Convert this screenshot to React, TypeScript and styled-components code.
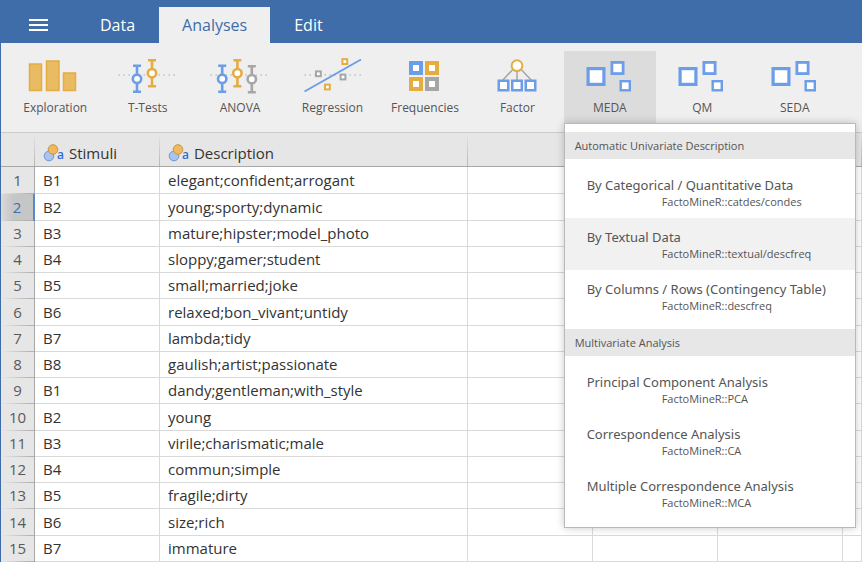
import React from "react";
import styled, { createGlobalStyle } from "styled-components";

const BLUE = "#3e6da9";
const SKY = "#6b9de8";
const GOLD = "#e6ac40";
const GREY = "#a6a6a6";

const GlobalStyle = createGlobalStyle`
  *, *::before, *::after { box-sizing: border-box; }
  body {
    margin: 0;
    font-family: "Open Sans", "Noto Sans", sans-serif;
    color: #333;
    overflow: hidden;
  }
  button { font: inherit; color: inherit; border: 0; margin: 0; padding: 0; background: none; cursor: pointer; }
`;

const Window = styled.div`
  display: flex;
  flex-direction: column;
  height: 100vh;
  overflow: hidden;
  border-left: 1px solid ${BLUE};
  background: #fff;
`;

const TitleBar = styled.header`
  display: flex;
  align-items: flex-end;
  flex: none;
  height: 43px;
  background: ${BLUE};
`;

const MenuButton = styled.button`
  display: flex;
  align-items: center;
  justify-content: center;
  width: 75px;
  height: 36px;
`;

const TabList = styled.div`
  display: flex;
`;

const Tab = styled.button<{ $active?: boolean }>`
  height: 36px;
  padding: 1px ${(p) => (p.$active ? "23px" : "24px")} 0;
  font-size: 16px;
  line-height: 35px;
  color: ${(p) => (p.$active ? BLUE : "#fff")};
  background: ${(p) => (p.$active ? "#efefef" : "transparent")};
`;

const Ribbon = styled.nav`
  position: relative;
  z-index: 2;
  display: flex;
  flex: none;
  height: 90px;
  padding: 8px 21px 0 8px;
  background: #efefef;
  border-bottom: 1px solid #cbcbcb;
`;

const RibbonItem = styled.div`
  position: relative;
  flex: 1 1 0;
  max-width: 93px;
`;

const RibbonButton = styled.button<{ $open?: boolean }>`
  display: flex;
  flex-direction: column;
  align-items: center;
  gap: 2px;
  width: 100%;
  height: 73px;
  font-size: 12px;
  line-height: 18px;
  color: #555;
  background: ${(p) => (p.$open ? "#dcdcdc" : "transparent")};
`;

const Menu = styled.div`
  position: absolute;
  top: 72px;
  left: 0;
  width: 292px;
  padding: 8px 0;
  background: #fff;
  border: 1px solid #b9b9b9;
  box-shadow: 0 0 8px rgba(0, 0, 0, 0.22);
`;

const MenuHeading = styled.h2`
  margin: 0 0 7px;
  padding: 0 10px;
  font-size: 11px;
  font-weight: 400;
  line-height: 27px;
  color: #555;
  background: #e7e7e7;
  &:not(:first-child) { margin-top: 7px; }
`;

const MenuItem = styled.button<{ $hover?: boolean }>`
  display: block;
  width: 100%;
  height: 52px;
  padding: 1px 0 0 22px;
  text-align: left;
  white-space: nowrap;
  color: #555;
  background: ${(p) => (p.$hover ? "#f1f1f1" : "transparent")};
`;

const ItemTitle = styled.span`
  display: block;
  font-family: "Noto Sans", "Open Sans", sans-serif;
  font-size: 13px;
  line-height: 18px;
`;

const ItemSource = styled.span`
  display: block;
  padding-left: 75px;
  font-size: 11px;
  line-height: 16px;
`;

const SheetArea = styled.main`
  flex: 1;
  min-height: 0;
  overflow: hidden;
`;

const Sheet = styled.table`
  width: 100%;
  table-layout: fixed;
  border-collapse: separate;
  border-spacing: 0;
  font-size: 15px;
  line-height: 20px;
`;

const HeadCell = styled.th`
  height: 34px;
  padding: 6px 0 0 8px;
  text-align: left;
  font-weight: 400;
  white-space: nowrap;
  background: linear-gradient(#e6e6e6, #b5b5b5) right / 1px 100% no-repeat #e6e6e6;
  border-bottom: 1px solid #a8a8a8;
`;

const HeadLabel = styled.span`
  display: flex;
  align-items: center;
  gap: 5px;
`;

const Row = styled.tr`
  height: 26px;
  &:first-child, &:nth-child(4n + 2) { height: 27px; }
`;

const RowHead = styled.th<{ $selected?: boolean }>`
  padding: 0 0 2px;
  font-weight: 400;
  text-align: center;
  color: ${(p) => (p.$selected ? BLUE : "#5a5a5a")};
  background:
    linear-gradient(90deg, transparent, #adadad) bottom / 100% 1px no-repeat,
    ${(p) => (p.$selected ? "linear-gradient(90deg, #dadada, #c6c6c6 12px)" : "#e6e6e6")};
  border-right: ${(p) => (p.$selected ? "2px solid #5b88c8" : "1px solid #a8a8a8")};
`;

const Cell = styled.td`
  padding: 0 0 1px 8px;
  white-space: nowrap;
  border-right: 1px solid #d9d9d9;
  border-bottom: 1px solid #d9d9d9;
`;

function Whisker({ x, y, color }: { x: number; y: number; color: string }) {
  return (
    <g stroke={color} strokeWidth="2.6">
      <path d={`M${x} ${y - 13}V${y + 13}M${x - 4} ${y - 13}h8M${x - 4} ${y + 13}h8`} fill="none" />
      <circle cx={x} cy={y} r="4.2" fill="#fff" />
    </g>
  );
}

function Box({ x, y, w, s = 2, color }: { x: number; y: number; w: number; s?: number; color: string }) {
  return <rect x={x + s / 2} y={y + s / 2} width={w - s} height={w - s} fill="#fff" stroke={color} strokeWidth={s} />;
}

const Dots = ({ x }: { x: number }) => (
  <path d={`M${x} 24h57`} stroke="#b4c0d4" strokeWidth="1.500" strokeDasharray="1.400 3.600" />
);

const Icon = ({ children }: { children: React.ReactNode }) => (
  <svg width="62" height="46" viewBox="0 0 62 46" fill="none" aria-hidden="true">
    {children}
  </svg>
);

const squares = (
  <Icon>
    <Box x={7.5} y={16} w={19} s={3.2} color={SKY} />
    <Box x={31.5} y={10} w={14} s={2.8} color={SKY} />
    <Box x={40.5} y={29} w={11.5} s={2.4} color={SKY} />
  </Icon>
);

const icons: Record<string, React.ReactNode> = {
  Exploration: (
    <Icon>
      <g fill="#e9bb62" stroke={GOLD} strokeWidth="1.500">
        <path d="M5.500 13h12v26.500h-12zM22.500 10h12.500v29.500h-12.500zM39.500 22h12v17.500h-12z" />
      </g>
    </Icon>
  ),
  "T-Tests": (
    <Icon>
      <Dots x={1.5} />
      <Whisker x={20} y={27.8} color={SKY} />
      <Whisker x={35} y={22.2} color={GOLD} />
    </Icon>
  ),
  ANOVA: (
    <Icon>
      <Dots x={1.5} />
      <Whisker x={13.2} y={27.8} color={SKY} />
      <Whisker x={28.4} y={22.2} color={GOLD} />
      <Whisker x={42.8} y={28.2} color={GREY} />
    </Icon>
  ),
  Regression: (
    <Icon>
      <Dots x={2.5} />
      <path d="M2.500 40.500L59 8.500" stroke={SKY} strokeWidth="2" />
      <Box x={39.4} y={7.2} w={6.8} color={GOLD} />
      <Box x={13} y={19.4} w={6.8} color={GREY} />
      <Box x={37.6} y={22.6} w={6.8} color={GREY} />
      <Box x={22} y={32.6} w={6.8} color={GOLD} />
    </Icon>
  ),
  Frequencies: (
    <Icon>
      <Box x={15} y={10} w={14} s={4} color={SKY} />
      <Box x={31} y={10} w={14} s={4} color={GOLD} />
      <Box x={15} y={26} w={14} s={4} color={GOLD} />
      <Box x={31} y={26} w={14} s={4} color={GREY} />
    </Icon>
  ),
  Factor: (
    <Icon>
      <path d="M31 14L16 30M31 14V30M31 14L46 30" stroke={GREY} strokeWidth="1.500" />
      <circle cx="31" cy="14.700" r="5.400" fill="#fff" stroke={GOLD} strokeWidth="2" />
      <Box x={11.5} y={28.5} w={12} s={2.5} color={SKY} />
      <Box x={25} y={28.5} w={12} s={2.5} color={SKY} />
      <Box x={38.5} y={28.5} w={12} s={2.5} color={SKY} />
    </Icon>
  ),
  MEDA: squares,
  QM: squares,
  SEDA: squares,
};

const TypeIcon = styled.span`
  display: flex;
  align-items: center;
`;

const TypeLetter = styled.span`
  margin-left: -2px;
  padding-top: 4px;
  font-size: 12px;
  font-weight: 600;
  line-height: 16px;
  color: #2f6bd6;
`;

const NominalTextIcon = () => (
  <TypeIcon aria-hidden="true">
    <svg width="16" height="20" viewBox="0 0 16 20">
      <circle cx="6" cy="13" r="4.800" fill="#a9c4f0" stroke="#6b96d8" />
      <circle cx="10" cy="6.500" r="4.800" fill="#f0ba5c" stroke="#c2964a" />
    </svg>
    <TypeLetter>a</TypeLetter>
  </TypeIcon>
);

const sections = [
  {
    title: "Automatic Univariate Description",
    items: [
      ["By Categorical / Quantitative Data", "FactoMineR::catdes/condes"],
      ["By Textual Data", "FactoMineR::textual/descfreq"],
      ["By Columns / Rows (Contingency Table)", "FactoMineR::descfreq"],
    ],
  },
  {
    title: "Multivariate Analysis",
    items: [
      ["Principal Component Analysis", "FactoMineR::PCA"],
      ["Correspondence Analysis", "FactoMineR::CA"],
      ["Multiple Correspondence Analysis", "FactoMineR::MCA"],
    ],
  },
];

const rows = [
  ["B1", "elegant;confident;arrogant"],
  ["B2", "young;sporty;dynamic"],
  ["B3", "mature;hipster;model_photo"],
  ["B4", "sloppy;gamer;student"],
  ["B5", "small;married;joke"],
  ["B6", "relaxed;bon_vivant;untidy"],
  ["B7", "lambda;tidy"],
  ["B8", "gaulish;artist;passionate"],
  ["B1", "dandy;gentleman;with_style"],
  ["B2", "young"],
  ["B3", "virile;charismatic;male"],
  ["B4", "commun;simple"],
  ["B5", "fragile;dirty"],
  ["B6", "size;rich"],
  ["B7", "immature"],
];

const Col = styled.col<{ $w?: number }>`
  width: ${(p) => (p.$w ? `${p.$w}px` : "auto")};
`;

export default function App() {
  return (
    <Window>
      <GlobalStyle />
      <TitleBar>
        <MenuButton aria-label="Menu">
          <svg width="19" height="12" viewBox="0 0 19 12" aria-hidden="true">
            <path d="M0 1h19M0 6h19M0 11h19" stroke="#fff" strokeWidth="2" />
          </svg>
        </MenuButton>
        <TabList role="tablist">
          <Tab role="tab">Data</Tab>
          <Tab role="tab" aria-selected $active>Analyses</Tab>
          <Tab role="tab">Edit</Tab>
        </TabList>
      </TitleBar>
      <Ribbon>
        {Object.entries(icons).map(([name, icon]) => (
          <RibbonItem key={name}>
            <RibbonButton $open={name === "MEDA"}>
              {icon}
              {name}
            </RibbonButton>
            {name === "MEDA" && (
              <Menu>
                {sections.map((section) => (
                  <React.Fragment key={section.title}>
                    <MenuHeading>{section.title}</MenuHeading>
                    {section.items.map(([title, source]) => (
                      <MenuItem key={title} $hover={title === "By Textual Data"}>
                        <ItemTitle>{title}</ItemTitle>
                        <ItemSource>{source}</ItemSource>
                      </MenuItem>
                    ))}
                  </React.Fragment>
                ))}
              </Menu>
            )}
          </RibbonItem>
        ))}
      </Ribbon>
      <SheetArea>
        <Sheet>
          <colgroup>
            <Col $w={34} />
            <Col $w={125} />
            <Col $w={308} />
            <Col $w={125} />
            <Col $w={125} />
            <Col $w={125} />
            <Col />
          </colgroup>
          <thead>
            <tr>
              <HeadCell />
              <HeadCell scope="col"><HeadLabel><NominalTextIcon />Stimuli</HeadLabel></HeadCell>
              <HeadCell scope="col"><HeadLabel><NominalTextIcon />Description</HeadLabel></HeadCell>
              <HeadCell />
              <HeadCell />
              <HeadCell />
              <HeadCell />
            </tr>
          </thead>
          <tbody>
            {rows.map(([stimulus, description], i) => (
              <Row key={i}>
                <RowHead scope="row" $selected={i === 1}>{i + 1}</RowHead>
                <Cell>{stimulus}</Cell>
                <Cell>{description}</Cell>
                <Cell />
                <Cell />
                <Cell />
                <Cell />
              </Row>
            ))}
          </tbody>
        </Sheet>
      </SheetArea>
    </Window>
  );
}
